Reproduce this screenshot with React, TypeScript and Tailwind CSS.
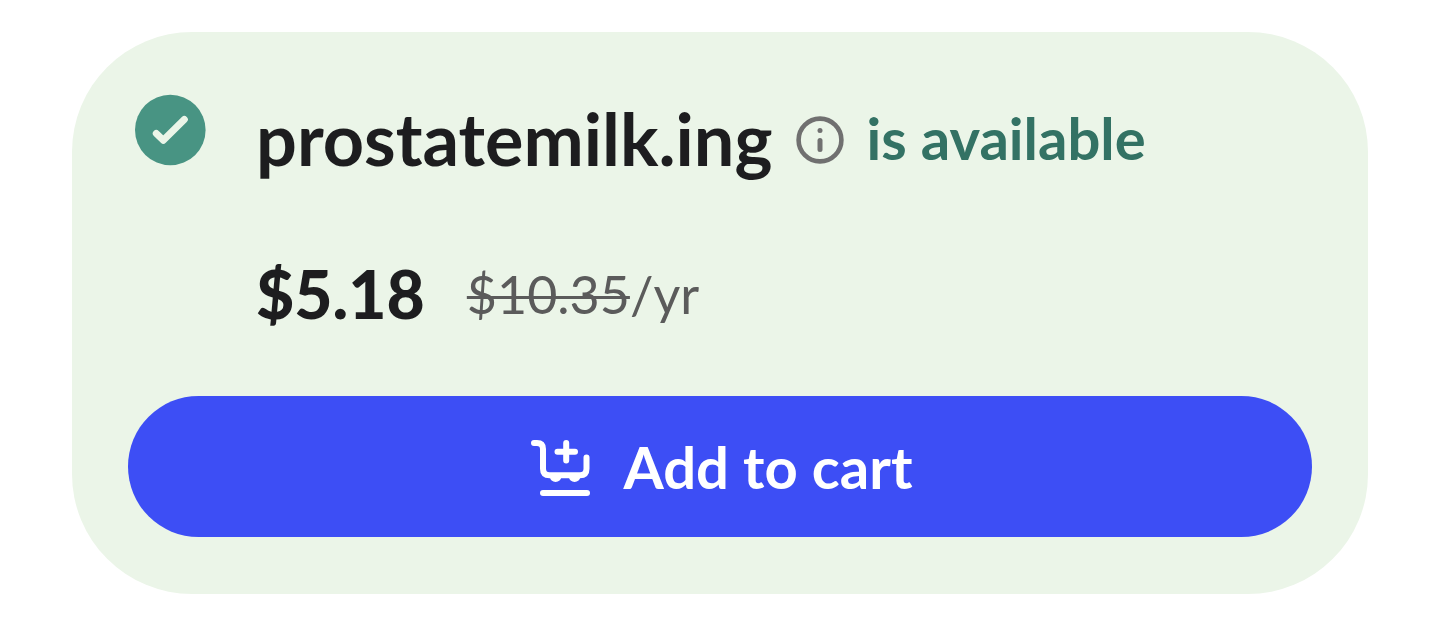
import React from "react";

interface DomainOffer {
  name: string;
  price: string;
  regularPrice: string;
  period: string;
}

const offer: DomainOffer = {
  name: "prostatemilk.ing",
  price: "$5.18",
  regularPrice: "$10.35",
  period: "/yr",
};

const AvailableIcon = () => (
  <svg viewBox="0 0 72 72" className="size-[72px] shrink-0" aria-hidden="true">
    <circle cx="36.3" cy="36" r="35.3" fill="#489483" />
    <path
      d="M22.3 39.5 29.3 46.2 50.3 25.5"
      fill="none"
      stroke="#ebf5e8"
      strokeWidth="7"
      strokeLinecap="round"
      strokeLinejoin="round"
    />
  </svg>
);

const InfoIcon = () => (
  <svg viewBox="0 0 48 48" className="size-12" fill="none" aria-hidden="true">
    <circle cx="24" cy="24" r="21.4" stroke="#707070" strokeWidth="4.6" />
    <circle cx="24" cy="14.5" r="2.5" fill="#707070" />
    <path
      d="M24 24.4V33.6"
      stroke="#707070"
      strokeWidth="5"
      strokeLinecap="round"
    />
  </svg>
);

const CartIcon = () => (
  <svg
    viewBox="0 0 64 64"
    className="size-16"
    fill="none"
    stroke="currentColor"
    strokeWidth="6"
    strokeLinecap="round"
    aria-hidden="true"
  >
    <path d="M6 8h3q6 0 6 6V33.8q0 6.5 6.5 6.5H52q6.5 0 6.5-6.5V22.5" />
    <path d="M29.5 16.8h17.5M38.2 8v17.5" />
    <path d="M15 58h44" />
    {/* wheels, only the part below the basket */}
    <path
      d="M22 42a5.6 5 0 0 0 11.2 0zM41 42a5.6 5 0 0 0 11.2 0z"
      fill="currentColor"
      stroke="none"
    />
  </svg>
);

const App: React.FC = () => {
  return (
    <main className="min-h-screen bg-white px-[72px] py-8 font-['Lato',sans-serif]">
      <section className="rounded-[120px] bg-[#ebf5e8] px-14 pt-[62px] pb-[57px]">
        <div className="flex gap-[50px] pl-[6px]">
          <AvailableIcon />
          <div className="flex flex-col gap-[68px]">
            <div className="flex items-center">
              <h1 className="text-[72px] leading-[88px] font-bold text-[#1d1d1f]">
                {offer.name}
              </h1>
              <button
                type="button"
                aria-label="About this domain"
                className="mt-1 ml-6"
              >
                <InfoIcon />
              </button>
              <span className="ml-[22px] text-[58px] leading-[88px] font-bold text-[#337264]">
                is available
              </span>
            </div>
            <p className="flex items-center gap-[42px] leading-[88px]">
              <strong className="text-[66px] font-black text-[#1d1d1f]">
                {offer.price}
              </strong>
              <span className="text-[52px] text-[#5b5b5b]">
                <s className="decoration-[3px]">{offer.regularPrice}</s>
                {offer.period}
              </span>
            </p>
          </div>
        </div>
        <button
          type="button"
          className="mt-[58px] flex h-[141px] w-full items-center justify-center gap-8 rounded-full bg-[#3d4ef5] text-[58px] font-bold text-white"
        >
          <CartIcon />
          Add to cart
        </button>
      </section>
    </main>
  );
};

export default App;
